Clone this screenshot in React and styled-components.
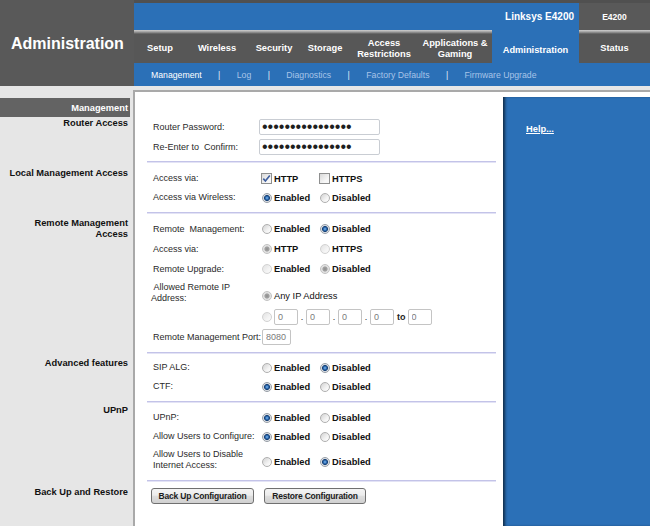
import React from 'react';
import styled, { createGlobalStyle, css } from 'styled-components';

const BLUE = '#2b70b7';
const FONT = '"Liberation Sans", Arial, sans-serif';

const GlobalStyle = createGlobalStyle`
  html, body { margin: 0; padding: 0; height: 100%; }
  body { background: #e6e6e6; font-family: ${FONT}; color: #222; }
  #root { min-height: 100%; display: flex; flex-direction: column; }
`;

const Page = styled.div`
  flex: 1;
  width: 650px;
  display: flex;
  flex-direction: column;
`;

/* ---------- header ---------- */
const Header = styled.header`
  display: flex;
  height: 86px;
  background: #505050;
`;

const TitleBlock = styled.div`
  width: 134px;
  flex: none;
  box-sizing: border-box;
  display: flex;
  align-items: center;
  padding: 2px 0 0 11px;
  background: #595959;
  color: #fff;
  font-size: 16px;
  font-weight: bold;
`;

const NavArea = styled.div`
  flex: 1;
  display: flex;
  flex-direction: column;
  padding-top: 3px;
`;

const BrandBar = styled.div`
  display: flex;
  height: 27px;
`;

const Brand = styled.div`
  flex: 1;
  display: flex;
  align-items: center;
  justify-content: flex-end;
  padding-right: 5px;
  background: ${BLUE};
  color: #fff;
  font-size: 10px;
  font-weight: bold;
`;

const Model = styled.div`
  width: 71px;
  display: flex;
  align-items: center;
  justify-content: center;
  background: #595959;
  color: #fff;
  font-size: 8.5px;
  font-weight: bold;
`;

const TabRow = styled.nav`
  display: flex;
  height: 33px;
`;

const Tab = styled.div`
  width: ${p => p.$w}px;
  flex: none;
  box-sizing: border-box;
  display: flex;
  align-items: center;
  justify-content: center;
  text-align: center;
  color: #fff;
  font-size: 9.3px;
  font-weight: bold;
  line-height: 11px;
  ${p => p.$active
    ? css`
        background: ${BLUE};
        padding-top: 7px;
      `
    : css`
        background: linear-gradient(#cfcfcf 0, #a9a9a9 1.5px, #7b7b7b 3px, #575757 4px, #575757);
        padding-top: 4px;
      `}
`;

const SubNav = styled.div`
  height: 23px;
  display: flex;
  align-items: center;
  padding-left: 17px;
  background: ${BLUE};
  font-size: 8.7px;
`;

const SubLink = styled.span`
  color: ${p => (p.$active ? '#fff' : '#a8c4e8')};
`;

const Pipe = styled.span`
  margin: 0 16.4px;
  color: #e4ecf6;
`;

/* ---------- body ---------- */
const Body = styled.main`
  flex: 1;
  margin-top: 4px;
  display: grid;
  grid-template-columns: 133px 370px 1fr;
  grid-template-rows: auto auto auto auto auto auto 1fr;
`;

const SideHead = styled.div`
  grid-column: 1;
  padding: 8px 3px 0 0;
`;

const SideHeadBar = styled.div`
  height: 19px;
  display: flex;
  align-items: center;
  justify-content: flex-end;
  padding-right: 2px;
  background: #636363;
  color: #fff;
  font-size: 9.3px;
  font-weight: bold;
`;

const SideLabel = styled.div`
  grid-column: 1;
  padding: ${p => p.$pt}px 5px 0 0;
  text-align: right;
  color: #111;
  font-size: 9.3px;
  font-weight: bold;
  line-height: 11px;
`;

const Panel = styled.div`
  grid-column: 2;
  background: #fff;
  border-left: 2px solid #a9a9a9;
  padding: ${p => p.$pt || 0}px 7px 0 18px;
  ${p => p.$first && css`border-top: 2px solid #a9a9a9;`}
`;

const Rule = styled.div`
  margin: ${p => p.$mt}px 0 0 -6px;
  height: 0;
  border-top: 1px solid #c3c3e8;
  border-bottom: 1px solid #e3e3f5;
`;

const Row = styled.div`
  display: grid;
  grid-template-columns: 106px 1fr;
  align-items: center;
  min-height: ${p => p.$h || 20}px;
`;

const Label = styled.div`
  white-space: nowrap;
  color: #2a2a2a;
  font-size: 9px;
  line-height: 11px;
  ${p => p.$shift && css`margin-left: ${p.$shift}px;`}
`;

const Value = styled.div`
  display: flex;
  align-items: center;
  padding-left: ${p => p.$pl ?? 3}px;
  ${p => p.$top && css`padding-top: ${p.$top}px;`}
  gap: ${p => p.$gap || 0}px;
`;

const Choice = styled.span`
  display: inline-flex;
  align-items: center;
  gap: 2px;
  min-width: ${p => p.$w || 58}px;
  color: #111;
  font-size: 9.3px;
  font-weight: ${p => (p.$plain ? 'normal' : 'bold')};
`;

const radioBg = ({ $checked, $disabled }) => {
  if ($checked && !$disabled)
    return css`
      border-color: #979ea6;
      background: radial-gradient(circle at 50% 50%, #8cc0f0 0, #3274bd 1.3px, #163e70 2.7px, #d6dae0 3.2px, #f1f2f4 5px);
    `;
  if ($checked && $disabled)
    return css`
      border-color: #c2c2c2;
      background: radial-gradient(circle at 50% 50%, #8d8d8d 0, #a4a4a4 2.2px, #dcdcdc 2.9px, #f0f0f0 5px);
    `;
  if ($disabled)
    return css`
      border-color: #d2d2d2;
      background: linear-gradient(135deg, #e2e2e2, #f6f6f6 70%);
    `;
  return css`
    border-color: #afafaf;
    background: linear-gradient(135deg, #d2d2d2, #f3f3f3 60%, #fff);
  `;
};

const RadioDot = styled.span`
  width: 10px;
  height: 10px;
  flex: none;
  box-sizing: border-box;
  border: 1px solid;
  border-radius: 50%;
  ${radioBg}
`;

const Box = styled.span`
  width: 11px;
  height: 11px;
  flex: none;
  box-sizing: border-box;
  display: inline-flex;
  align-items: center;
  justify-content: center;
  border: 1px solid #8e8f8f;
  background: linear-gradient(135deg, #d9d9d9, #f7f7f7 70%);
`;

const Field = styled.input`
  width: ${p => p.$w}px;
  height: 16px;
  box-sizing: border-box;
  margin: 0;
  padding: 0 0 0 3px;
  border: 1px solid #c4c4c4;
  border-radius: 2px;
  background: #fff;
  color: #7b7b7b;
  font: 9px ${FONT};
  outline: none;
`;

const Secret = styled(Field)`
  padding: 0 0 0 2px;
  color: #1f1f1f;
  font-size: 16px;
  border-color: #c9cdd3;
`;

const IpDot = styled.span`
  width: 8px;
  text-align: center;
  color: #222;
  font-size: 9px;
`;

const To = styled.span`
  margin: 0 2px 0 3px;
  color: #222;
  font-size: 9px;
  font-weight: bold;
`;

const Button = styled.button`
  width: ${p => p.$w}px;
  height: 16px;
  padding: 0;
  border: 1px solid #707070;
  border-radius: 3px;
  background: linear-gradient(#f4f4f4, #ececec 45%, #dedede 50%, #d0d0d0);
  color: #1c1c1c;
  font: bold 8.5px ${FONT};
  letter-spacing: -0.2px;
`;

const HelpCol = styled.aside`
  grid-column: 3;
  grid-row: 1 / -1;
  display: flex;
  flex-direction: column;
  padding-top: 5px;
  background: #fff;
  border-top: 2px solid #a9a9a9;
`;

const HelpPanel = styled.div`
  flex: 1;
  padding: 24px 0 0 23px;
  background: ${BLUE};
  box-shadow: inset 3px 0 3px -1px rgba(0, 0, 0, 0.6);
  line-height: 11px;
`;

const HelpLink = styled.a`
  color: #fff;
  font-size: 9.3px;
  font-weight: bold;
  text-decoration: underline;
`;

/* ---------- small pieces ---------- */
const Radio = ({ checked, disabled, children, w, plain }) => (
  <Choice $w={w} $plain={plain}>
    <RadioDot $checked={checked} $disabled={disabled} />
    {children}
  </Choice>
);

const Check = ({ checked, children }) => (
  <Choice>
    <Box>
      {checked && (
        <svg width="9" height="9" viewBox="0 0 9 9">
          <path d="M1.3 4.6 L3.4 7 L7.8 1.4" fill="none" stroke="#3f5f9e" strokeWidth="1.6" />
        </svg>
      )}
    </Box>
    {children}
  </Choice>
);

const Pair = ({ on }) => (
  <Value>
    <Radio checked={on}>Enabled</Radio>
    <Radio checked={!on}>Disabled</Radio>
  </Value>
);

const Section = ({ label, lpt, pt, rule, children }) => (
  <>
    <SideLabel $pt={lpt}>{label}</SideLabel>
    <Panel $pt={pt}>
      {children}
      {rule !== undefined && <Rule $mt={rule} />}
    </Panel>
  </>
);

const tabs = [
  { t: 'Setup', w: 52 },
  { t: 'Wireless', w: 62 },
  { t: 'Security', w: 52 },
  { t: 'Storage', w: 50 },
  { t: <>Access<br />Restrictions</>, w: 68 },
  { t: <>Applications &amp;<br />Gaming</>, w: 74 },
  { t: 'Administration', w: 87, active: true },
  { t: 'Status', w: 71 },
];

const subs = ['Management', 'Log', 'Diagnostics', 'Factory Defaults', 'Firmware Upgrade'];

export default function App() {
  return (
    <>
      <GlobalStyle />
      <Page>
        <Header>
          <TitleBlock>Administration</TitleBlock>
          <NavArea>
            <BrandBar>
              <Brand>Linksys E4200</Brand>
              <Model>E4200</Model>
            </BrandBar>
            <TabRow>
              {tabs.map((tab, i) => (
                <Tab key={i} $w={tab.w} $active={tab.active}>{tab.t}</Tab>
              ))}
            </TabRow>
            <SubNav>
              {subs.map((s, i) => (
                <React.Fragment key={s}>
                  {i > 0 && <Pipe>|</Pipe>}
                  <SubLink $active={i === 0}>{s}</SubLink>
                </React.Fragment>
              ))}
            </SubNav>
          </NavArea>
        </Header>

        <Body>
          <SideHead><SideHeadBar>Management</SideHeadBar></SideHead>
          <Panel $first />

          <Section label="Router Access" lpt={1} pt={0} rule={4}>
            <Row>
              <Label>Router Password:</Label>
              <Value $pl={0}><Secret type="password" readOnly value="aaaaaaaaaaaaaaaa" $w={121} /></Value>
            </Row>
            <Row>
              <Label>Re-Enter to&nbsp; Confirm:</Label>
              <Value $pl={0}><Secret type="password" readOnly value="aaaaaaaaaaaaaaaa" $w={121} /></Value>
            </Row>
          </Section>

          <Section label="Local Management Access" lpt={5} pt={6} rule={5}>
            <Row $h={19}>
              <Label>Access via:</Label>
              <Value $pl={2}>
                <Check checked>HTTP</Check>
                <Check>HTTPS</Check>
              </Value>
            </Row>
            <Row $h={19}>
              <Label>Access via Wireless:</Label>
              <Pair on />
            </Row>
          </Section>

          <Section label={<>Remote Management<br />Access</>} lpt={4} pt={5} rule={5}>
            <Row>
              <Label>Remote&nbsp; Management:</Label>
              <Pair on={false} />
            </Row>
            <Row>
              <Label>Access via:</Label>
              <Value>
                <Radio checked disabled>HTTP</Radio>
                <Radio disabled>HTTPS</Radio>
              </Value>
            </Row>
            <Row>
              <Label>Remote Upgrade:</Label>
              <Value>
                <Radio disabled>Enabled</Radio>
                <Radio checked disabled>Disabled</Radio>
              </Value>
            </Row>
            <Row $h={28}>
              <Label $shift={-2}>&nbsp;Allowed Remote IP<br />Address:</Label>
              <Value $top={5}>
                <Radio checked disabled plain w={90}>Any IP Address</Radio>
              </Value>
            </Row>
            <Row>
              <Label />
              <Value>
                <RadioDot $disabled style={{ marginRight: 2 }} />
                <Field readOnly value="0" $w={24} />
                <IpDot>.</IpDot>
                <Field readOnly value="0" $w={24} />
                <IpDot>.</IpDot>
                <Field readOnly value="0" $w={24} />
                <IpDot>.</IpDot>
                <Field readOnly value="0" $w={24} />
                <To>to</To>
                <Field readOnly value="0" $w={24} />
              </Value>
            </Row>
            <Row>
              <Label>Remote Management Port:</Label>
              <Value><Field readOnly value="8080" $w={29} /></Value>
            </Row>
          </Section>

          <Section label="Advanced features" lpt={4} pt={4} rule={5}>
            <Row $h={19}>
              <Label>SIP ALG:</Label>
              <Pair on={false} />
            </Row>
            <Row $h={19}>
              <Label>CTF:</Label>
              <Pair on />
            </Row>
          </Section>

          <Section label="UPnP" lpt={2} pt={5} rule={6}>
            <Row $h={19}>
              <Label>UPnP:</Label>
              <Pair on />
            </Row>
            <Row $h={19}>
              <Label>Allow Users to Configure:</Label>
              <Pair on />
            </Row>
            <Row $h={28}>
              <Label>Allow Users to Disable<br />Internet Access:</Label>
              <Value $top={4}>
                <Radio>Enabled</Radio>
                <Radio checked>Disabled</Radio>
              </Value>
            </Row>
          </Section>

          <Section label="Back Up and Restore" lpt={5} pt={6}>
            <Value $pl={0} $gap={10} style={{ marginLeft: -2 }}>
              <Button $w={103}>Back Up Configuration</Button>
              <Button $w={102}>Restore Configuration</Button>
            </Value>
          </Section>

          <HelpCol>
            <HelpPanel><HelpLink href="#">Help...</HelpLink></HelpPanel>
          </HelpCol>
        </Body>
      </Page>
    </>
  );
}
